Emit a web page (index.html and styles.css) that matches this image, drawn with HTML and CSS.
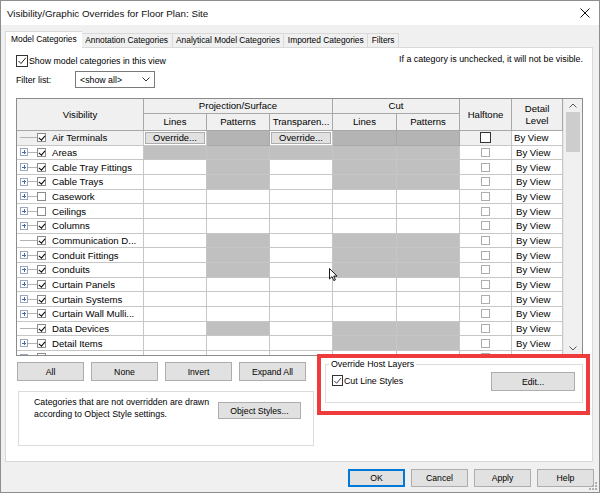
FILE: index.html
```html
<!DOCTYPE html>
<html>
<head>
<meta charset="utf-8">
<title>Visibility/Graphic Overrides</title>
<link rel="stylesheet" href="styles.css">
</head>
<body>
<div class="window">
  <div class="titlebar">
    <span class="title">Visibility/Graphic Overrides for Floor Plan: Site</span>
    <svg class="close" width="10" height="10" viewBox="0 0 10 10"><path d="M0.5 0.5 L9.5 9.5 M9.5 0.5 L0.5 9.5" stroke="#111" stroke-width="1" fill="none"/></svg>
  </div>
  <div class="main">
    <div class="tabs">
      <div class="tab active">Model Categories</div>
      <div class="tab">Annotation Categories</div>
      <div class="tab">Analytical Model Categories</div>
      <div class="tab">Imported Categories</div>
      <div class="tab">Filters</div>
    </div>
    <div class="page">
      <div class="toprow">
        <label class="chk"><span class="box"><svg width="10" height="10" viewBox="0 0 10 10"><path d="M1.5 5 L4 7.5 L8.8 1.8" stroke="#222" stroke-width="1" fill="none"/></svg></span>Show model categories in this view</label>
        <span class="info">If a category is unchecked, it will not be visible.</span>
      </div>
      <div class="filterrow">
        <span class="flabel">Filter list:</span>
        <div class="select"><span>&lt;show all&gt;</span><svg width="8" height="5" viewBox="0 0 8 5"><path d="M0.5 0.5 L4 4 L7.5 0.5" stroke="#333" stroke-width="1" fill="none"/></svg></div>
      </div>

      <div class="table">
        <div class="grid">
          <div class="head">
            <div class="h h-vis">Visibility</div>
            <div class="h h-proj">Projection/Surface</div>
            <div class="h h-cut">Cut</div>
            <div class="h h-half">Halftone</div>
            <div class="h h-det">Detail<br>Level</div>
            <div class="h">Lines</div>
            <div class="h">Patterns</div>
            <div class="h">Transparen...</div>
            <div class="h">Lines</div>
            <div class="h">Patterns</div>
          </div>
          <div class="rows">
            <div class="row sel">
              <div class="c vis"><span class="tline long"></span><span class="cb on"></span><span class="nm">Air Terminals</span></div>
              <div class="c"><span class="ovr">Override...</span></div>
              <div class="c gd"></div>
              <div class="c"><span class="ovr">Override...</span></div>
              <div class="c gd"></div>
              <div class="c gd"></div>
              <div class="c ht"><span class="hb big"></span></div>
              <div class="c dl">By View</div>
            </div>
            <div class="row">
              <div class="c vis"><span class="plus"></span><span class="tline"></span><span class="cb on"></span><span class="nm">Areas</span></div>
              <div class="c g"></div><div class="c g"></div><div class="c g"></div><div class="c g"></div><div class="c g"></div>
              <div class="c ht"><span class="hb"></span></div><div class="c dl">By View</div>
            </div>
            <div class="row">
              <div class="c vis"><span class="plus"></span><span class="tline"></span><span class="cb on"></span><span class="nm">Cable Tray Fittings</span></div>
              <div class="c"></div><div class="c g"></div><div class="c"></div><div class="c g"></div><div class="c g"></div>
              <div class="c ht"><span class="hb"></span></div><div class="c dl">By View</div>
            </div>
            <div class="row">
              <div class="c vis"><span class="plus"></span><span class="tline"></span><span class="cb on"></span><span class="nm">Cable Trays</span></div>
              <div class="c"></div><div class="c g"></div><div class="c"></div><div class="c g"></div><div class="c g"></div>
              <div class="c ht"><span class="hb"></span></div><div class="c dl">By View</div>
            </div>
            <div class="row">
              <div class="c vis"><span class="plus"></span><span class="tline"></span><span class="cb"></span><span class="nm">Casework</span></div>
              <div class="c"></div><div class="c"></div><div class="c"></div><div class="c"></div><div class="c"></div>
              <div class="c ht"><span class="hb"></span></div><div class="c dl">By View</div>
            </div>
            <div class="row">
              <div class="c vis"><span class="plus"></span><span class="tline"></span><span class="cb"></span><span class="nm">Ceilings</span></div>
              <div class="c"></div><div class="c"></div><div class="c"></div><div class="c"></div><div class="c"></div>
              <div class="c ht"><span class="hb"></span></div><div class="c dl">By View</div>
            </div>
            <div class="row">
              <div class="c vis"><span class="plus"></span><span class="tline"></span><span class="cb on"></span><span class="nm">Columns</span></div>
              <div class="c"></div><div class="c"></div><div class="c"></div><div class="c"></div><div class="c"></div>
              <div class="c ht"><span class="hb"></span></div><div class="c dl">By View</div>
            </div>
            <div class="row">
              <div class="c vis"><span class="tline long"></span><span class="cb on"></span><span class="nm">Communication D...</span></div>
              <div class="c"></div><div class="c g"></div><div class="c"></div><div class="c g"></div><div class="c g"></div>
              <div class="c ht"><span class="hb"></span></div><div class="c dl">By View</div>
            </div>
            <div class="row">
              <div class="c vis"><span class="plus"></span><span class="tline"></span><span class="cb on"></span><span class="nm">Conduit Fittings</span></div>
              <div class="c"></div><div class="c g"></div><div class="c"></div><div class="c g"></div><div class="c g"></div>
              <div class="c ht"><span class="hb"></span></div><div class="c dl">By View</div>
            </div>
            <div class="row">
              <div class="c vis"><span class="plus"></span><span class="tline"></span><span class="cb on"></span><span class="nm">Conduits</span></div>
              <div class="c"></div><div class="c g"></div><div class="c"></div><div class="c g"></div><div class="c g"></div>
              <div class="c ht"><span class="hb"></span></div><div class="c dl">By View</div>
            </div>
            <div class="row">
              <div class="c vis"><span class="plus"></span><span class="tline"></span><span class="cb on"></span><span class="nm">Curtain Panels</span></div>
              <div class="c"></div><div class="c"></div><div class="c"></div><div class="c"></div><div class="c"></div>
              <div class="c ht"><span class="hb"></span></div><div class="c dl">By View</div>
            </div>
            <div class="row">
              <div class="c vis"><span class="plus"></span><span class="tline"></span><span class="cb on"></span><span class="nm">Curtain Systems</span></div>
              <div class="c"></div><div class="c"></div><div class="c"></div><div class="c"></div><div class="c"></div>
              <div class="c ht"><span class="hb"></span></div><div class="c dl">By View</div>
            </div>
            <div class="row">
              <div class="c vis"><span class="plus"></span><span class="tline"></span><span class="cb on"></span><span class="nm">Curtain Wall Mulli...</span></div>
              <div class="c"></div><div class="c"></div><div class="c"></div><div class="c"></div><div class="c"></div>
              <div class="c ht"><span class="hb"></span></div><div class="c dl">By View</div>
            </div>
            <div class="row">
              <div class="c vis"><span class="tline long"></span><span class="cb on"></span><span class="nm">Data Devices</span></div>
              <div class="c"></div><div class="c g"></div><div class="c"></div><div class="c g"></div><div class="c g"></div>
              <div class="c ht"><span class="hb"></span></div><div class="c dl">By View</div>
            </div>
            <div class="row">
              <div class="c vis"><span class="plus"></span><span class="tline"></span><span class="cb on"></span><span class="nm">Detail Items</span></div>
              <div class="c"></div><div class="c"></div><div class="c"></div><div class="c g"></div><div class="c g"></div>
              <div class="c ht"><span class="hb"></span></div><div class="c dl">By View</div>
            </div>
            <div class="row">
              <div class="c vis"><span class="plus"></span><span class="tline"></span><span class="cb"></span><span class="nm">Doors</span></div>
              <div class="c"></div><div class="c"></div><div class="c"></div><div class="c"></div><div class="c"></div>
              <div class="c ht"><span class="hb"></span></div><div class="c dl">By View</div>
            </div>
          </div>
        </div>
        <div class="scrollbar">
          <svg class="arrow" width="8" height="5" viewBox="0 0 8 5"><path d="M0.5 4.5 L4 1 L7.5 4.5" stroke="#555" stroke-width="1" fill="none"/></svg>
          <div class="thumb"></div>
          <div class="track"></div>
          <svg class="arrow" width="8" height="5" viewBox="0 0 8 5"><path d="M0.5 0.5 L4 4 L7.5 0.5" stroke="#555" stroke-width="1" fill="none"/></svg>
        </div>
      </div>

      <div class="lower">
        <div class="lcol">
          <div class="btnrow">
            <button class="btn wide">All</button>
            <button class="btn wide">None</button>
            <button class="btn wide">Invert</button>
            <button class="btn wide">Expand All</button>
          </div>
          <div class="group">
            <p class="note">Categories that are not overridden are drawn<br>according to Object Style settings.</p>
            <button class="btn obj">Object Styles...</button>
          </div>
        </div>
        <fieldset class="host">
          <legend>Override Host Layers</legend>
          <div class="hostrow">
            <label class="chk small"><span class="box"><svg width="10" height="10" viewBox="0 0 10 10"><path d="M1.5 5 L4 7.5 L8.8 1.8" stroke="#222" stroke-width="1" fill="none"/></svg></span>Cut Line Styles</label>
            <button class="btn edit">Edit...</button>
          </div>
        </fieldset>
      </div>
    </div>
    <div class="footer">
      <button class="btn fb default">OK</button>
      <button class="btn fb">Cancel</button>
      <button class="btn fb">Apply</button>
      <button class="btn fb">Help</button>
    </div>
  </div>
  <div class="highlight"></div>
  <svg class="cursor" width="10" height="14" viewBox="0 0 10 14"><path d="M0.5 0.5 L0.5 11 L3 8.7 L4.8 12.6 L6.4 11.9 L4.7 8.1 L8 8.1 Z" fill="#fff" stroke="#000" stroke-width="0.9"/></svg>
  <svg class="grip" width="10" height="10" viewBox="0 0 10 10"><g fill="#b0b0b0"><rect x="7" y="1" width="2" height="2"/><rect x="4" y="4" width="2" height="2"/><rect x="7" y="4" width="2" height="2"/><rect x="1" y="7" width="2" height="2"/><rect x="4" y="7" width="2" height="2"/><rect x="7" y="7" width="2" height="2"/></g></svg>
</div>
</body>
</html>
```

FILE: styles.css
```css
* { box-sizing: border-box; }
html, body { margin: 0; padding: 0; }
body {
  width: 600px; height: 493px; overflow: hidden;
  font-family: "Liberation Sans", Arial, sans-serif;
  font-size: 8.8px; color: #000; background: #fff;
}
button { font-family: inherit; font-size: 8.7px; color: #000; margin: 0; padding: 0; }

.window {
  position: relative; width: 600px; height: 493px;
  border: 1px solid #8e8e8e; background: #f0f0f0;
  display: flex; flex-direction: column;
}
.titlebar {
  height: 24px; flex: none; background: #fff;
  display: flex; align-items: center; justify-content: space-between;
  padding: 0 9px 0 6px;
}
.title { font-size: 9.8px; color: #111; }

.main { flex: 1; display: flex; flex-direction: column; padding: 6px 6px 0 4px; }

.tabs { display: flex; align-items: flex-end; height: 16px; position: relative; z-index: 1; }
.tab {
  height: 14px; padding: 0 3.5px; font-size: 8.4px; line-height: 13px;
  border: 1px solid #d9d9d9; border-bottom: none; border-right: none; background: #f0f0f0;
  white-space: nowrap;
}
.tab:last-child { border-right: 1px solid #d9d9d9; }
.tab.active {
  height: 17px; margin-bottom: -1px; background: #fff; padding: 0 5px; line-height: 15px;
}
.tab.active + .tab { border-left: none; }

.page {
  height: 415px; flex: none; background: #fff; border: 1px solid #d9d9d9;
  padding: 6px 9px 0 10px; display: flex; flex-direction: column;
}

.toprow { display: flex; justify-content: space-between; align-items: center; height: 13px; }
.chk { display: flex; align-items: center; gap: 1px; white-space: nowrap; }
.box {
  width: 12px; height: 12px; border: 1px solid #333; background: #fff;
  display: flex; align-items: center; justify-content: center;
}
.info { font-size: 8.9px; margin-top: -4px; }

.filterrow { display: flex; align-items: center; margin-top: 4px; height: 17px; }
.flabel { width: 59px; }
.select {
  width: 80px; height: 17px; border: 1px solid #7a7a7a; background: #fff;
  display: flex; align-items: center; justify-content: space-between; padding: 0 4px 0 4px;
}

.table {
  margin-top: 10px; height: 258px; width: 567px; flex: none;
  border: 1px solid #8c8c8c; display: flex; overflow: hidden;
}
.grid { width: 546px; display: flex; flex-direction: column; font-size: 9.6px; }
.head {
  display: grid;
  grid-template-columns: 127px 63px 63px 63px 64px 63px 52px 51px;
  grid-template-rows: 15px 17px;
  background: #f0f0f0;
}
.h {
  border-right: 1px solid #a8a8a8; border-bottom: 1px solid #a8a8a8;
  display: flex; align-items: center; justify-content: center; text-align: center;
  line-height: 12px; white-space: nowrap; overflow: hidden;
}
.h-vis { grid-row: 1 / 3; grid-column: 1; }
.h-proj { grid-column: 2 / 5; grid-row: 1; }
.h-cut { grid-column: 5 / 7; grid-row: 1; }
.h-half { grid-row: 1 / 3; grid-column: 7; }
.h-det { grid-row: 1 / 3; grid-column: 8; }

.rows { flex: 1; overflow: hidden; }
.row {
  display: grid;
  grid-template-columns: 127px 63px 63px 63px 64px 63px 52px 51px;
  height: 14.67px;
}
.c {
  border-right: 1px solid #c6c6c6; border-bottom: 1px solid #c6c6c6;
  display: flex; align-items: center; overflow: hidden; white-space: nowrap;
}
.c.g { background: #c0c0c0; }
.c.gd { background: #b4b4b4; border-color: #a8a8a8; }
.row.sel .vis, .row.sel .ht { background: #f0f0f0; }
.vis { padding-left: 3px; }
.plus {
  width: 8px; height: 8px; flex: none; border: 1px solid #9aa6ba; background: #fff; position: relative;
}
.plus::before { content: ""; position: absolute; left: 1px; top: 2.5px; width: 4px; height: 1px; background: #4a6aa8; }
.plus::after { content: ""; position: absolute; left: 2.5px; top: 1px; width: 1px; height: 4px; background: #4a6aa8; }
.tline { width: 9px; height: 0; border-top: 1px solid #b4b4b4; flex: none; }
.tline.long { width: 17px; }
.cb {
  width: 9px; height: 9px; flex: none; margin-left: 0; border: 1px solid #8a8a8a; background: #fff; position: relative;
}
.cb.on::after {
  content: ""; position: absolute; left: 2px; top: 0px; width: 2.5px; height: 5px;
  border-right: 1.8px solid #000; border-bottom: 1.8px solid #000; transform: rotate(40deg);
}
.nm { margin-left: 6px; }
.ovr {
  margin: 0 1px; flex: 1; height: 12px; border: 1px solid #adadad; background: #e1e1e1;
  text-align: center; line-height: 10px; font-size: 9.4px;
}
.ht { justify-content: center; }
.hb { width: 9px; height: 9px; border: 1px solid #adadad; background: #fff; }
.hb.big { width: 11px; height: 11px; border-color: #333; }
.dl { padding-left: 4px; }
.row.sel .dl { padding-left: 2px; }

.scrollbar {
  width: 19px; background: #f0f0f0; border-left: 1px solid #e6e6e6;
  display: flex; flex-direction: column; align-items: center;
}
.scrollbar .arrow { margin: 4px 0 4px; flex: none; }
.thumb { width: 14px; height: 40px; background: #cdcdcd; flex: none; }
.track { flex: 1; }

.lower { display: flex; align-items: flex-start; }
.lcol { width: 298px; flex: none; padding-left: 1px; }
.btnrow { display: flex; gap: 7px; margin-top: 6px; }
.btn {
  border: 1px solid #adadad; background: #e1e1e1; height: 19px;
  display: flex; align-items: center; justify-content: center;
}
.btn.wide { width: 67px; }
.group {
  margin: 10px 0 0 1px; width: 296px; height: 55px; border: 1px solid #dcdcdc;
  display: flex; align-items: flex-start; padding: 5px 12px 0 15px;
}
.note { margin: 0; line-height: 11.5px; font-size: 8.8px; }
.btn.obj { margin-left: auto; margin-top: 5px; width: 83px; height: 17px; }

.host {
  margin: 3px 0 0 11px; width: 258px; padding: 2px 7px 11px 3px;
  border: 1px solid #dcdcdc; min-width: 0;
}
.host legend { padding: 0 2px; font-size: 8.8px; line-height: 11px; margin-left: 0; }
.hostrow { display: flex; align-items: flex-start; }
.chk.small { margin: 3px 0 0 3px; }
.chk.small .box { width: 11px; height: 11px; }
.btn.edit { margin-left: auto; width: 84px; }

.footer { display: flex; justify-content: flex-end; gap: 6px; padding-top: 7px; margin-right: -1px; }
.btn.fb { width: 57px; height: 18px; }
.btn.default { border: 1px solid #0078d7; box-shadow: inset 0 0 0 1px #0078d7; }

.highlight {
  position: absolute; left: 316px; top: 353px; width: 273px; height: 61px;
  border: 4px solid #ee3b3b;
}
.cursor { position: absolute; left: 328px; top: 267px; }
.grip { position: absolute; right: 1px; bottom: 1px; }
```
